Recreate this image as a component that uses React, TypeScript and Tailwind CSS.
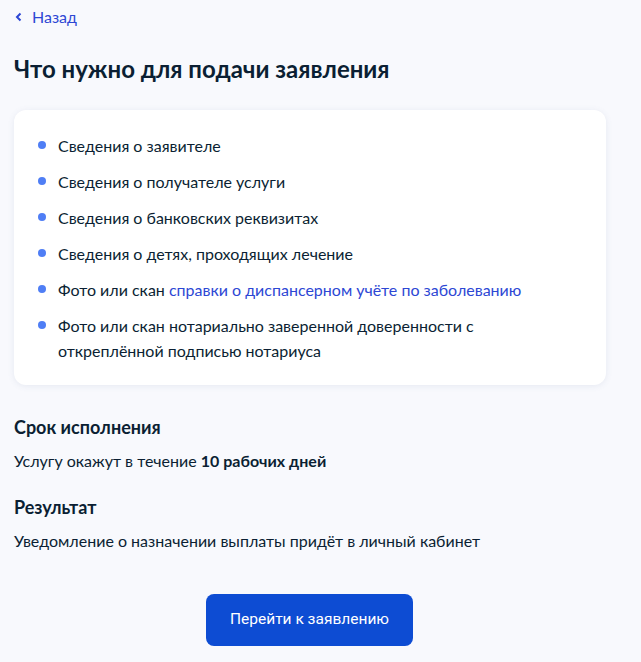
import React from "react";

const items: React.ReactNode[] = [
  "Сведения о заявителе",
  "Сведения о получателе услуги",
  "Сведения о банковских реквизитах",
  "Сведения о детях, проходящих лечение",
  <>
    Фото или скан{" "}
    <span className="text-[#2d47d4]">справки о диспансерном учёте по заболеванию</span>
  </>,
  <>
    Фото или скан нотариально заверенной доверенности с
    <br />
    откреплённой подписью нотариуса
  </>,
];

export default function App() {
  return (
    <div
      className="min-h-[662px] w-[641px] bg-[#f8f9fd] text-[#0b1f33]"
      style={{ fontFamily: "Lato, 'Noto Sans', sans-serif" }}
    >
      <div className="px-[14px] pt-[7px]">
        <div className="flex h-[20px] items-center gap-[9px] text-[16px] text-[#2d47d4]">
          <svg width="8" height="10" viewBox="0 0 8 10" className="ml-[1px]">
            <path d="M5.5 1.5 L2 5 L5.5 8.5" fill="none" stroke="#2d47d4" strokeWidth="2" />
          </svg>
          <span>Назад</span>
        </div>
        <h1 className="mt-[26px] text-[24px] font-bold leading-[32px]">Что нужно для подачи заявления</h1>

        <div className="mt-[25px] w-[592px] rounded-[12px] bg-white pb-[22px] pl-[24px] pr-[24px] pt-[23px] shadow-[0_1px_6px_rgba(102,119,160,0.12)]">
          <ul className="flex flex-col gap-[11px]">
            {items.map((it, i) => (
              <li key={i} className="flex text-[16px] leading-[25px]">
                <span className="mt-[8px] mr-[12px] h-[8px] w-[8px] shrink-0 rounded-full bg-[#4f7ef5]" />
                <span>{it}</span>
              </li>
            ))}
          </ul>
        </div>

        <h2 className="mt-[30px] text-[18px] font-bold leading-[24px]">Срок исполнения</h2>
        <p className="mt-[10px] text-[16px] leading-[24px]">
          Услугу окажут в течение <b className="font-bold">10 рабочих дней</b>
        </p>
        <h2 className="mt-[22px] text-[18px] font-bold leading-[24px]">Результат</h2>
        <p className="mt-[10px] text-[16px] leading-[24px]">
          Уведомление о назначении выплаты придёт в личный кабинет
        </p>

        <div className="mt-[41px] flex">
          <button
            className="ml-[192px] h-[52px] w-[207px] rounded-[8px] bg-[#0d4cd3] text-[15.5px] text-white"
            style={{ fontFamily: "Roboto, Lato, sans-serif" }}
          >
            Перейти к заявлению
          </button>
        </div>
      </div>
    </div>
  );
}
